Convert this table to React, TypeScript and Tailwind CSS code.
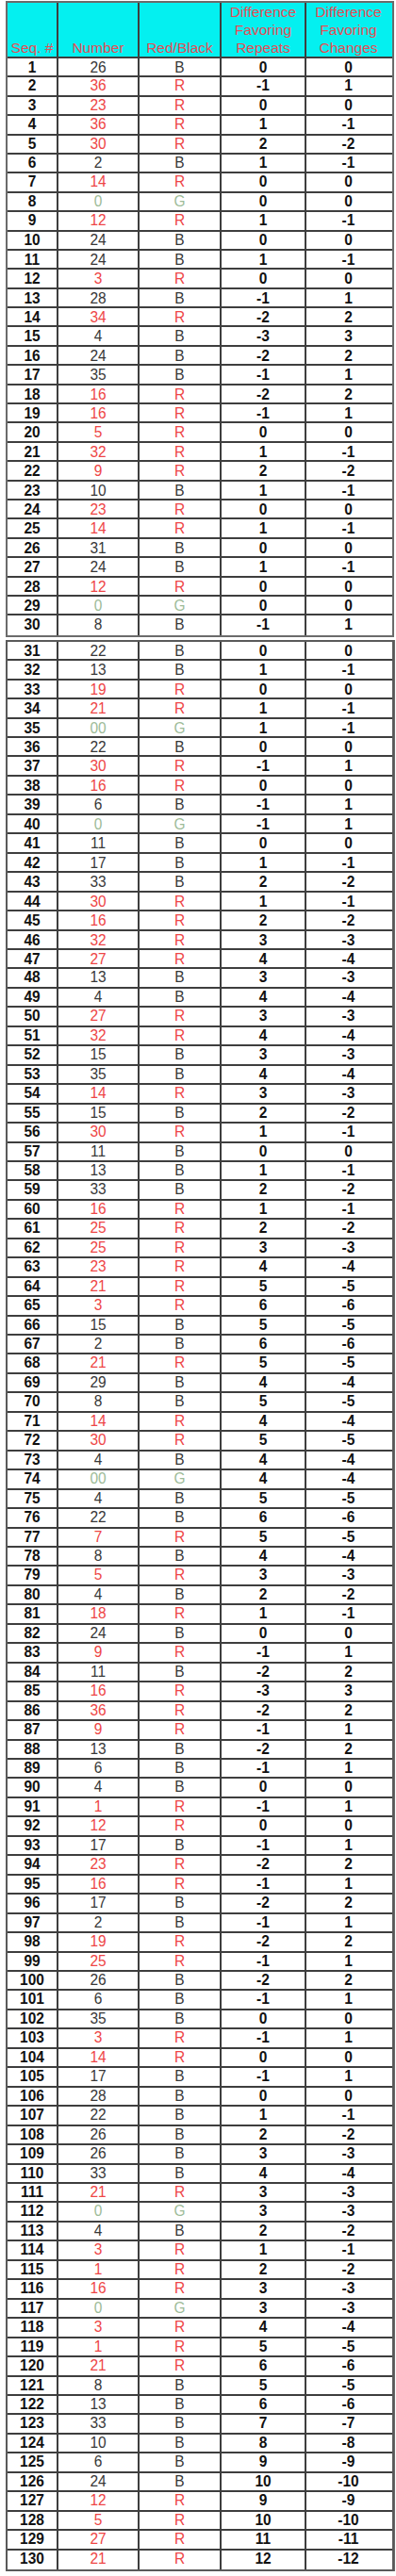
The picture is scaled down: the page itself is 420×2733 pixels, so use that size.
import React from "react";

const RAW = `26 B 0 0
36 R -1 1
23 R 0 0
36 R 1 -1
30 R 2 -2
2 B 1 -1
14 R 0 0
0 G 0 0
12 R 1 -1
24 B 0 0
24 B 1 -1
3 R 0 0
28 B -1 1
34 R -2 2
4 B -3 3
24 B -2 2
35 B -1 1
16 R -2 2
16 R -1 1
5 R 0 0
32 R 1 -1
9 R 2 -2
10 B 1 -1
23 R 0 0
14 R 1 -1
31 B 0 0
24 B 1 -1
12 R 0 0
0 G 0 0
8 B -1 1
22 B 0 0
13 B 1 -1
19 R 0 0
21 R 1 -1
00 G 1 -1
22 B 0 0
30 R -1 1
16 R 0 0
6 B -1 1
0 G -1 1
11 B 0 0
17 B 1 -1
33 B 2 -2
30 R 1 -1
16 R 2 -2
32 R 3 -3
27 R 4 -4
13 B 3 -3
4 B 4 -4
27 R 3 -3
32 R 4 -4
15 B 3 -3
35 B 4 -4
14 R 3 -3
15 B 2 -2
30 R 1 -1
11 B 0 0
13 B 1 -1
33 B 2 -2
16 R 1 -1
25 R 2 -2
25 R 3 -3
23 R 4 -4
21 R 5 -5
3 R 6 -6
15 B 5 -5
2 B 6 -6
21 R 5 -5
29 B 4 -4
8 B 5 -5
14 R 4 -4
30 R 5 -5
4 B 4 -4
00 G 4 -4
4 B 5 -5
22 B 6 -6
7 R 5 -5
8 B 4 -4
5 R 3 -3
4 B 2 -2
18 R 1 -1
24 B 0 0
9 R -1 1
11 B -2 2
16 R -3 3
36 R -2 2
9 R -1 1
13 B -2 2
6 B -1 1
4 B 0 0
1 R -1 1
12 R 0 0
17 B -1 1
23 R -2 2
16 R -1 1
17 B -2 2
2 B -1 1
19 R -2 2
25 R -1 1
26 B -2 2
6 B -1 1
35 B 0 0
3 R -1 1
14 R 0 0
17 B -1 1
28 B 0 0
22 B 1 -1
26 B 2 -2
26 B 3 -3
33 B 4 -4
21 R 3 -3
0 G 3 -3
4 B 2 -2
3 R 1 -1
1 R 2 -2
16 R 3 -3
0 G 3 -3
3 R 4 -4
1 R 5 -5
21 R 6 -6
8 B 5 -5
13 B 6 -6
33 B 7 -7
10 B 8 -8
6 B 9 -9
24 B 10 -10
12 R 9 -9
5 R 10 -10
27 R 11 -11
21 R 12 -12`;

type Row = { seq: number; num: string; rb: string; rep: string; chg: string };

const ROWS: Row[] = RAW.split("\n").map((line, i) => {
  const [num, rb, rep, chg] = line.trim().split(" ");
  return { seq: i + 1, num, rb, rep, chg };
});

const colorFor = (rb: string) =>
  rb === "R" ? "text-[#ee4646]" : rb === "G" ? "text-[#9dbb98]" : "text-[#383838]";

const GRID = "grid grid-cols-[54px_86px_87px_90px_89px]";

function Cell({ children, cls, border }: { children: React.ReactNode; cls: string; border: boolean }) {
  return (
    <div className={`text-center leading-[16px] pt-[1px] ${border ? "border-r-2 border-[#3e3e3e]" : ""} ${cls}`}>
      <span className="inline-block scale-y-[1.1]">{children}</span>
    </div>
  );
}

function DataRow({ r, last, h }: { r: Row; last: boolean; h: string }) {
  const c = colorFor(r.rb);
  return (
    <div className={`${GRID} ${h} ${last ? "" : "border-b-2 border-[#3e3e3e]"}`}>
      <Cell cls="font-bold text-[#111]" border>
        {r.seq}
      </Cell>
      <Cell cls={c} border>
        {r.num}
      </Cell>
      <Cell cls={c} border>
        {r.rb}
      </Cell>
      <Cell cls="font-bold text-[#111]" border>
        {r.rep}
      </Cell>
      <Cell cls="font-bold text-[#111]" border={false}>
        {r.chg}
      </Cell>
    </div>
  );
}

function HeaderCell({ lines, border }: { lines: string[]; border: boolean }) {
  return (
    <div
      className={`flex flex-col justify-end items-center pb-[1px] text-[#e64d55] leading-[19px] ${
        border ? "border-r-2 border-[#3e3e3e]" : ""
      }`}
    >
      {lines.map((l) => (
        <span key={l}>{l}</span>
      ))}
    </div>
  );
}

export default function App() {
  const part1 = ROWS.slice(0, 30);
  const part2 = ROWS.slice(30);
  return (
    <div
      className="bg-white min-h-[2733px] pl-[6px] pt-[1px] text-[15.5px]"
      style={{ fontFamily: '"Liberation Sans", Arial, Helvetica, sans-serif' }}
    >
      <div className="w-[412px] border-2 border-[#6b6b6b]">
        <div className={`${GRID} h-[59px] bg-[#04f0f0] border-b-2 border-[#3e3e3e]`}>
          <HeaderCell lines={["Seq. #"]} border />
          <HeaderCell lines={["Number"]} border />
          <HeaderCell lines={["Red/Black"]} border />
          <HeaderCell lines={["Difference", "Favoring", "Repeats"]} border />
          <HeaderCell lines={["Difference", "Favoring", "Changes"]} border={false} />
        </div>
        {part1.map((r, i) => (
          <DataRow key={r.seq} r={r} last={i === part1.length - 1} h="h-[20.4px]" />
        ))}
      </div>
      <div className="mt-[3px] w-[413px] border-r border-[#6b6b6b] pr-[1px]">
        <div className="w-[412px] border-2 border-[#5a5a5a]">
          {part2.map((r, i) => (
            <DataRow key={r.seq} r={r} last={i === part2.length - 1} h="h-[20.46px]" />
          ))}
        </div>
      </div>
    </div>
  );
}
